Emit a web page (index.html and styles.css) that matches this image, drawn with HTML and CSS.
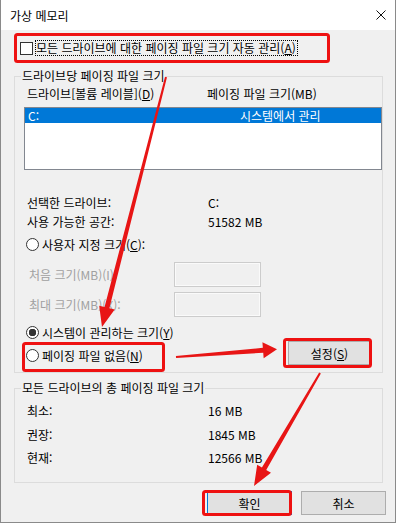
FILE: index.html
```html
<!DOCTYPE html>
<html lang="ko">
<head>
    <meta charset="UTF-8">
    <meta name="viewport" content="width=device-width, initial-scale=1.0">
    <title>가상 메모리</title>
    <link rel="stylesheet" href="styles.css">
</head>
<body>
    <div class="window">
        <div class="titlebar">
            <span class="title">가상 메모리</span>
            <svg class="close" width="10" height="10" viewBox="0 0 10 10">
                <path d="M0.5 0.5 L9.5 9.5 M9.5 0.5 L0.5 9.5" stroke="#111" stroke-width="1" fill="none"/>
            </svg>
        </div>
        <div class="content">
            <div class="check-row">
                <span class="checkbox"></span>
                <span class="focus">모든 드라이브에 대한 페이징 파일 크기 자동 관리(<u>A</u>)</span>
            </div>

            <fieldset class="group group-drive">
                <legend>드라이브당 페이징 파일 크기</legend>
                <div class="col-head">
                    <span>드라이브[볼륨 레이블](<u>D</u>)</span>
                    <span>페이징 파일 크기(MB)</span>
                </div>
                <div class="listbox">
                    <div class="list-item selected">
                        <span>C:</span>
                        <span>시스템에서 관리</span>
                    </div>
                </div>
                <div class="info first">
                    <span>선택한 드라이브:</span>
                    <span>C:</span>
                </div>
                <div class="info">
                    <span>사용 가능한 공간:</span>
                    <span>51582 MB</span>
                </div>
                <div class="radio-row custom">
                    <span class="radio"></span>
                    <span>사용자 지정 크기(<u>C</u>):</span>
                </div>
                <div class="size-row first">
                    <span class="disabled">처음 크기(MB)(I):</span>
                    <span class="textbox"></span>
                </div>
                <div class="size-row">
                    <span class="disabled">최대 크기(MB)(X):</span>
                    <span class="textbox"></span>
                </div>
                <div class="radio-row managed">
                    <span class="radio checked"></span>
                    <span>시스템이 관리하는 크기(<u>Y</u>)</span>
                </div>
                <div class="last-row">
                    <div class="radio-row">
                        <span class="radio"></span>
                        <span>페이징 파일 없음(<u>N</u>)</span>
                    </div>
                    <button class="btn set">설정(<u>S</u>)</button>
                </div>
            </fieldset>

            <fieldset class="group group-total">
                <legend>모든 드라이브의 총 페이징 파일 크기</legend>
                <div class="info total first">
                    <span>최소:</span>
                    <span>16 MB</span>
                </div>
                <div class="info total">
                    <span>권장:</span>
                    <span>1845 MB</span>
                </div>
                <div class="info total">
                    <span>현재:</span>
                    <span>12566 MB</span>
                </div>
            </fieldset>

            <div class="buttons">
                <button class="btn default">확인</button>
                <button class="btn">취소</button>
            </div>
        </div>

        <!-- 빨간 표시 (주석) -->
        <svg class="marks" width="396" height="523" viewBox="0 0 396 523">
            <g fill="none" stroke="#ee1111" stroke-width="3">
                <rect x="15.5" y="34.5" width="313" height="27" rx="2"/>
                <rect x="23.5" y="343.5" width="140" height="27" rx="2"/>
                <rect x="284.5" y="339.5" width="86" height="27" rx="2"/>
                <rect x="203.5" y="491.5" width="87" height="23" rx="2"/>
            </g>
            <g fill="#e81515">
                <polygon points="166.97,77.25 109.38,308.24 114.71,309.6 102,327 99.21,305.64 104.54,307 165.03,76.75"/>
                <polygon points="176.08,358 263.23,352.77 263.66,358.26 277,349.2 262.42,342.3 262.85,347.79 175.92,356"/>
                <polygon points="320.86,373.5 266.24,470 270.98,472.77 254,486 257.18,464.71 261.92,467.48 319.14,372.5"/>
            </g>
        </svg>
    </div>
</body>
</html>
```

FILE: styles.css
```css
* {
    box-sizing: border-box;
}
body {
    margin: 0;
    background: #fff;
}
.window {
    position: relative;
    width: 396px;
    height: 523px;
    background: #f0f0f0;
    border: 1px solid #8a8a8a;
    border-top: none;
    font-family: "Noto Sans CJK KR", "Noto Sans", sans-serif;
    font-size: 12px;
    color: #000;
}
u {
    text-underline-offset: 1px;
}
.titlebar {
    height: 30px;
    background: #fff;
    display: flex;
    align-items: center;
    justify-content: space-between;
    padding: 0 9px;
}
.content {
    padding: 0 12px 0 13px;
}
.check-row {
    display: flex;
    align-items: center;
    height: 16px;
    margin-top: 10px;
    padding-left: 6px;
}
.checkbox {
    width: 13px;
    height: 13px;
    border: 1px solid #333;
    background: #fff;
}
.focus {
    margin-left: 2px;
    line-height: 14px;
    border: 1px dotted #000;
    padding: 0 1px 0 0;
}
.group {
    margin: 12px 0 0;
    padding: 0 0 7px;
    border: 1px solid #dcdcdc;
    min-width: 0;
}
.group legend {
    margin-left: 6px;
    padding: 0 1px;
    line-height: 16px;
}
.col-head {
    display: grid;
    grid-template-columns: 180px auto;
    margin-top: 2px;
    padding-left: 12px;
    line-height: 16px;
}
.listbox {
    margin: 5px 0 0 9px;
    width: 358px;
    height: 63px;
    border: 1px solid #828790;
    background: #fff;
}
.list-item {
    display: grid;
    grid-template-columns: 212px auto;
    height: 15px;
    line-height: 15px;
    padding-left: 3px;
}
.list-item.selected {
    background: #0078d7;
    color: #fff;
}
.info {
    display: grid;
    grid-template-columns: 181px auto;
    padding-left: 12px;
    height: 19px;
    line-height: 19px;
}
.info.first {
    margin-top: 23px;
}
.info.total {
    height: 23.5px;
    line-height: 23.5px;
}
.info.total.first {
    margin-top: 3px;
}
.radio-row {
    display: flex;
    align-items: center;
    gap: 3px;
    height: 19px;
    padding-left: 11px;
}
.radio-row.custom {
    margin-top: 4px;
}
.radio-row.managed {
    margin-top: 6px;
    height: 18px;
}
.radio {
    width: 13px;
    height: 13px;
    border: 1px solid #333;
    border-radius: 50%;
    background: #fff;
}
.radio.checked {
    background: radial-gradient(circle, #333 3.5px, #fff 4px);
}
.size-row {
    display: flex;
    align-items: center;
    height: 25px;
    margin-top: 5px;
    padding-left: 14px;
}
.size-row.first {
    margin-top: 8px;
}
.size-row .disabled {
    width: 145px;
    color: #a0a0a0;
}
.textbox {
    width: 87px;
    height: 25px;
    border: 1px solid #cccccc;
    box-shadow: inset 0 0 0 1px #fafafa;
    background: #f0f0f0;
}
.last-row {
    display: flex;
    align-items: flex-end;
    justify-content: space-between;
    height: 24px;
}
.btn {
    width: 85px;
    height: 24px;
    padding: 0;
    background: #e1e1e1;
    border: 1px solid #adadad;
    font-family: inherit;
    font-size: 12px;
    color: #000;
}
.btn.set {
    width: 83px;
    margin-right: 11px;
}
.btn.default {
    border-color: #0078d7;
}
.group-total {
    margin-top: 7px;
    padding-bottom: 12.5px;
}
.buttons {
    display: flex;
    justify-content: flex-end;
    gap: 9px;
    margin-top: 8px;
    margin-right: -3px;
}
.marks {
    position: absolute;
    left: -1px;
    top: 0;
    pointer-events: none;
}
```
